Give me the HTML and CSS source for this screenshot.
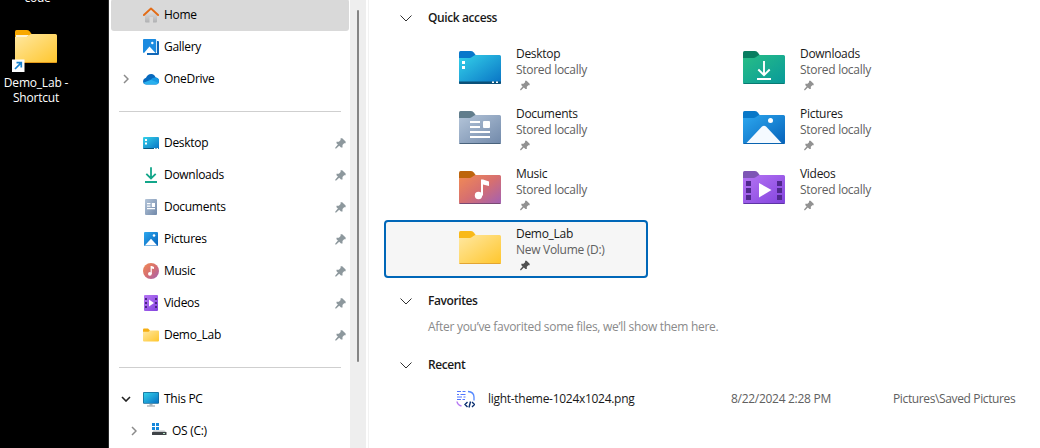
FILE: index.html
```
<!DOCTYPE html>
<html lang="en">
<head>
<meta charset="utf-8">
<title>Home - File Explorer</title>
<link rel="stylesheet" href="styles.css">
</head>
<body>
<svg class="defs" aria-hidden="true">
  <defs>
    <linearGradient id="g-yellow" x1="0" y1="0" x2="1" y2="1"><stop offset="0" stop-color="#ffe8a2"/><stop offset="1" stop-color="#ffc62c"/></linearGradient>
    <linearGradient id="g-desk" x1="0" y1="0" x2="1" y2="1"><stop offset="0" stop-color="#35d2ea"/><stop offset="1" stop-color="#0872c4"/></linearGradient>
    <linearGradient id="g-doc" x1="0" y1="0" x2="1" y2="1"><stop offset="0" stop-color="#b4c5d9"/><stop offset="1" stop-color="#7189aa"/></linearGradient>
    <linearGradient id="g-music" x1="0" y1="0" x2="1" y2="1"><stop offset="0" stop-color="#f28b54"/><stop offset=".5" stop-color="#d66f70"/><stop offset="1" stop-color="#a260b4"/></linearGradient>
    <linearGradient id="g-down" x1="0" y1="0" x2="1" y2="1"><stop offset="0" stop-color="#28be86"/><stop offset="1" stop-color="#08999a"/></linearGradient>
    <linearGradient id="g-pic" x1="0" y1="0" x2="1" y2="1"><stop offset="0" stop-color="#2da8ef"/><stop offset="1" stop-color="#0562ba"/></linearGradient>
    <linearGradient id="g-video" x1="0" y1="0" x2="1" y2="1"><stop offset="0" stop-color="#b675f4"/><stop offset="1" stop-color="#8243dd"/></linearGradient>
    <linearGradient id="g-house" x1="0" y1="0" x2="0" y2="1"><stop offset="0" stop-color="#e6e6e6"/><stop offset="1" stop-color="#b0b1b3"/></linearGradient>
    <symbol id="tab" viewBox="0 0 42 33"><path d="M0 1.500Q0 0 1.500 0H11.500Q13.500 0 14.800 1.400L17 4.500V9H0Z"/></symbol>
    <symbol id="front" viewBox="0 0 42 33"><path d="M0 7H10.500Q12 7 13 6L14.500 4.900Q15.500 4 17 4H40.500Q42 4 42 5.500V31.500Q42 33 40.500 33H1.500Q0 33 0 31.500Z"/></symbol>
    <symbol id="pin" viewBox="0 0 11 11"><path d="M5.600 0.300H7.200L10.600 3.500V5.200H9.100L7.500 7V9.400H6L4.200 7.800L1.200 10.600H0.200V9.700L2.900 6.500L1.500 5.200V3.700H3.900L5.600 2Z"/></symbol>
    <symbol id="chev-down" viewBox="0 0 12 7"><path d="M.5.500L6 6L11.500.500" fill="none" stroke="#303030"/></symbol>
  </defs>
</svg>
<div class="screen">
  <aside class="desktop">
    <div class="desk-label cut">code</div>
    <div class="shortcut">
      <svg class="shortcut-icon" viewBox="0 0 46 43">
        <g transform="translate(3 0)"><use href="#tab" width="42" height="33" fill="#f8a800"/><path d="M1 5H14L11 8H1Z" fill="#fff4d6"/><use href="#front" width="42" height="33" fill="url(#g-yellow)"/><path d="M.5 32.500H41.500" stroke="#e59b1b"/></g>
        <rect x="0" y="29.500" width="12.500" height="12.500" fill="#fff"/>
        <path d="M3 39L8.800 33.200M4.500 32.700H9.300V37.500" fill="none" stroke="#1782d0" stroke-width="1.700"/>
      </svg>
      <div class="desk-label">Demo_Lab -<br>Shortcut</div>
    </div>
  </aside>

  <nav class="sidebar">
    <div class="nav-row active"><span class="tw"></span>
      <svg class="ico" viewBox="0 0 16 16"><path d="M2 7.500L8 2.500L14 7.500V14.500Q14 15.500 13 15.500H10V10H6.500V15.500H3Q2 15.500 2 14.500Z" fill="url(#g-house)"/><path d="M.9 8L8 1.500L15.100 8" fill="none" stroke="#e36c16" stroke-width="1.900" stroke-linecap="round" stroke-linejoin="round"/></svg><span>Home</span></div>
    <div class="nav-row"><span class="tw"></span>
      <svg class="ico" viewBox="0 0 16 16"><path d="M14 2H15Q16 2 16 3V15Q16 16 15 16H4V14H14Z" fill="#1167b7"/><rect width="13.200" height="14" rx="1" fill="#1c8be0"/><path d="M1 14L6.500 7.500L12.500 14Z" fill="#fff"/><circle cx="9.300" cy="4" r="1.200" fill="#fff"/></svg><span>Gallery</span></div>
    <div class="nav-row"><span class="tw"><svg class="chev-r" viewBox="0 0 6 10"><path d="M1 1L5 5L1 9"/></svg></span>
      <svg class="ico" viewBox="0 0 16 16"><path d="M3.500 13.500Q0 13.500 0 10Q.2 7.500 3 6.800Q4.500 3 8.200 3Q11.600 3 12.600 6.500Q16 7 16 10.200Q15.800 13.500 12.500 13.500Z" fill="#0869bd"/><path d="M3 6.800L13.500 12.800Q16 12.400 16 10Q16 6.800 12.600 6.500Q9 6 7.500 9Z" fill="#1698e3"/><path d="M.4 11.800L8 8.700L15.500 12Q14.500 13.500 12.500 13.500H3.500Q1.200 13.500.4 11.800Z" fill="#29b0ee"/></svg><span>OneDrive</span></div>
    <div class="nav-row"><i class="rule"></i></div>
    <div class="nav-row"><span class="tw"></span>
      <svg class="ico" viewBox="0 0 16 16"><rect y="2" width="16" height="12" rx="1" fill="url(#g-desk)"/><path d="M2 4H4V6H2ZM2 7.500H4V9.500H2Z" fill="#fff"/><path d="M.5 13.500H15.500" stroke="#07577f"/><path d="M11 13.500H12.500M13.500 13.500H15" stroke="#fff"/></svg><span>Desktop</span><svg class="pin"><use href="#pin"/></svg></div>
    <div class="nav-row"><span class="tw"></span>
      <svg class="ico" viewBox="0 0 16 16"><path d="M8 .3V11M3.300 6.800L8 11.500L12.700 6.800M2 15H14" fill="none" stroke="#13a68a" stroke-width="1.800"/></svg><span>Downloads</span><svg class="pin"><use href="#pin"/></svg></div>
    <div class="nav-row"><span class="tw"></span>
      <svg class="ico" viewBox="0 0 16 16"><rect x="2" width="12" height="16" rx="1" fill="url(#g-doc)"/><path d="M4 4.700H7.500M4 7.200H7.500M4 9.700H12" stroke="#fff" stroke-width="1.200"/><path d="M8.800 4H12V8H8.800Z" fill="#fff"/></svg><span>Documents</span><svg class="pin"><use href="#pin"/></svg></div>
    <div class="nav-row"><span class="tw"></span>
      <svg class="ico" viewBox="0 0 16 16"><rect x="1" y="1" width="14" height="14" rx="1" fill="url(#g-pic)"/><path d="M1.800 14.500L8 7.700L14.200 14.500Z" fill="#fff"/><circle cx="11" cy="4.500" r="1.300" fill="#fff"/></svg><span>Pictures</span><svg class="pin"><use href="#pin"/></svg></div>
    <div class="nav-row"><span class="tw"></span>
      <svg class="ico" viewBox="0 0 16 16"><circle cx="8" cy="8" r="8" fill="url(#g-music)"/><circle cx="6.900" cy="10.800" r="1.900" fill="#fff"/><path d="M7.600 3H8.800L11 4V6L8.800 5.400V11H7.600Z" fill="#fff"/></svg><span>Music</span><svg class="pin"><use href="#pin"/></svg></div>
    <div class="nav-row"><span class="tw"></span>
      <svg class="ico" viewBox="0 0 16 16"><rect x="1" width="14" height="16" rx="1" fill="url(#g-video)"/><path d="M2 3H4V5H2ZM2 7H4V9H2ZM2 11H4V13H2ZM12 3H14V5H12ZM12 7H14V9H12ZM12 11H14V13H12Z" fill="#4b2685"/><path d="M6 4.500L11 8L6 11.500Z" fill="#fff"/></svg><span>Videos</span><svg class="pin"><use href="#pin"/></svg></div>
    <div class="nav-row"><span class="tw"></span>
      <svg class="ico" viewBox="0 0 16 16"><path d="M0 2.500Q0 1.500 1 1.500H5L7 3.500V6H0Z" fill="#f5ae13"/><path d="M0 4.800H5.500L7 3.500H15Q16 3.500 16 4.500V13.500Q16 14.500 15 14.500H1Q0 14.500 0 13.500Z" fill="url(#g-yellow)"/></svg><span>Demo_Lab</span><svg class="pin"><use href="#pin"/></svg></div>
    <div class="nav-row"><i class="rule"></i></div>
    <div class="nav-row"><span class="tw"><svg class="chev-d" viewBox="0 0 10 6"><path d="M1 1L5 5L9 1"/></svg></span>
      <svg class="ico" viewBox="0 0 16 16"><rect y="1" width="16" height="11.800" rx="1" fill="#146b99"/><rect x=".8" y="1.800" width="14.400" height="10.200" fill="url(#g-desk)"/><path d="M6.500 13H9.500V14.500H6.500Z" fill="#a9b3ba"/><path d="M4 15H12" stroke="#8d999f"/></svg><span>This PC</span></div>
    <div class="nav-row child"><span class="tw"><svg class="chev-r" viewBox="0 0 6 10"><path d="M1 1L5 5L1 9"/></svg></span>
      <svg class="ico" viewBox="0 0 16 16"><path d="M1 0H4V3H1ZM5 0H8V3H5ZM1 4H4V7H1ZM5 4H8V7H5Z" fill="#1487db"/><path d="M2.500 7.500H13.500L15.500 9.500H1Z" fill="#c4c6c9"/><rect x="1" y="9" width="14.500" height="3" rx=".5" fill="#3f4347"/><path d="M12 10.500H14" stroke="#b7e7c7"/></svg><span>OS (C:)</span></div>
  </nav>
  <div class="scroll"><i></i></div>

  <main class="content">
    <h2 class="head"><svg><use href="#chev-down"/></svg>Quick access</h2>
    <section class="grid">
      <article class="card"><svg class="folder" viewBox="0 0 42 33"><use href="#tab" width="42" height="33" fill="#0877cb"/><use href="#front" width="42" height="33" fill="url(#g-desk)"/><path d="M0 30.500H42V32Q42 33 41 33H1Q0 33 0 32Z" fill="#0b5078"/><path d="M3 10H6V13H3ZM3 15H6V18H3ZM33 30.500H35V32H33ZM37 30.500H39V32H37Z" fill="#fff"/></svg><div class="info"><b>Desktop</b><span>Stored locally</span><svg class="pin"><use href="#pin"/></svg></div></article>
      <article class="card"><svg class="folder" viewBox="0 0 42 33"><use href="#tab" width="42" height="33" fill="#087d60"/><use href="#front" width="42" height="33" fill="url(#g-down)"/><path d="M.5 32.500H41.500" stroke="#087a72"/><path d="M21 10V23.500M15.300 18.500L21 24.200L26.700 18.500M14 28H28" fill="none" stroke="#fff" stroke-width="1.900"/></svg><div class="info"><b>Downloads</b><span>Stored locally</span><svg class="pin"><use href="#pin"/></svg></div></article>
      <article class="card"><svg class="folder" viewBox="0 0 42 33"><use href="#tab" width="42" height="33" fill="#617d8c"/><use href="#front" width="42" height="33" fill="url(#g-doc)"/><path d="M.5 32.500H41.500" stroke="#49637c"/><path d="M11 11H21M11 16H21M11 21H31M11 26H31" stroke="#fff" stroke-width="2"/><rect x="24" y="10" width="7" height="7" rx="1" fill="#fff"/></svg><div class="info"><b>Documents</b><span>Stored locally</span><svg class="pin"><use href="#pin"/></svg></div></article>
      <article class="card"><svg class="folder" viewBox="0 0 42 33"><use href="#tab" width="42" height="33" fill="#0878c8"/><use href="#front" width="42" height="33" fill="url(#g-pic)"/><path d="M3.500 32L19 15.500Q21 14 23 15.500L38.500 32Z" fill="#f5faff"/><circle cx="27.500" cy="9.500" r="2.500" fill="#fff"/><path d="M.5 32.500H41.500" stroke="#0863b0"/></svg><div class="info"><b>Pictures</b><span>Stored locally</span><svg class="pin"><use href="#pin"/></svg></div></article>
      <article class="card"><svg class="folder" viewBox="0 0 42 33"><use href="#tab" width="42" height="33" fill="#bd650c"/><use href="#front" width="42" height="33" fill="url(#g-music)"/><path d="M.5 32.500H41.500" stroke="#7a4973"/><circle cx="19.500" cy="24.500" r="3.700" fill="#fff"/><path d="M22 8.500H24L30 10.500V15L24 13.500V24.500H22Z" fill="#fff"/></svg><div class="info"><b>Music</b><span>Stored locally</span><svg class="pin"><use href="#pin"/></svg></div></article>
      <article class="card"><svg class="folder" viewBox="0 0 42 33"><use href="#tab" width="42" height="33" fill="#7d55b5"/><use href="#front" width="42" height="33" fill="url(#g-video)"/><path d="M.5 32.500H41.500" stroke="#5d35a5"/><path d="M3 10H8V15H3ZM3 17H8V22H3ZM3 24H8V29H3ZM34 10H39V15H34ZM34 17H39V22H34ZM34 24H39V29H34Z" fill="#50288e"/><path d="M16 12L28.500 19L16 26.500Z" fill="#fff"/></svg><div class="info"><b>Videos</b><span>Stored locally</span><svg class="pin"><use href="#pin"/></svg></div></article>
      <article class="card selected"><svg class="folder" viewBox="0 0 42 33"><use href="#tab" width="42" height="33" fill="#f9b919"/><use href="#front" width="42" height="33" fill="url(#g-yellow)"/><path d="M.5 32.500H41.500" stroke="#e3a532"/></svg><div class="info"><b>Demo_Lab</b><span>New Volume (D:)</span><svg class="pin"><use href="#pin"/></svg></div></article>
    </section>
    <h2 class="head"><svg><use href="#chev-down"/></svg>Favorites</h2>
    <p class="empty">After you’ve favorited some files, we’ll show them here.</p>
    <h2 class="head recent"><svg><use href="#chev-down"/></svg>Recent</h2>
    <div class="file">
      <svg class="file-ico" viewBox="0 0 19 19"><path d="M1 1.500H5M6.500 1.500H9.500M1 4.500H3M4.500 4.500H9.500M1 7H6M7.500 7H9.500M1 9.500H5M6.500 9.500H9" stroke="#5276ff"/><path d="M12 1.500Q18 2 18 7V10.500" fill="none" stroke="#5488ff" stroke-width="1.300"/><path d="M1 11.500Q1.500 15 5.500 16" fill="none" stroke="#b77af3" stroke-width="1.500"/><path d="M11.500 12L9 14.500L11.500 17M16 12L18.500 14.500L16 17M14.500 11.500L13 17.500" fill="none" stroke="#092e70" stroke-width="1.400"/></svg>
      <span class="name">light-theme-1024x1024.png</span><span class="date">8/22/2024 2:28 PM</span><span class="path">Pictures\Saved Pictures</span>
    </div>
  </main>
</div>
</body>
</html>
```

FILE: styles.css
```
* { box-sizing: border-box; }
body { margin: 0; font: 12px/16px "Open Sans", "Noto Sans", sans-serif; letter-spacing: -0.29px; color: #191919; background: #fff; }
svg { display: block; flex: none; }
.defs { position: absolute; width: 0; height: 0; }
.screen { display: flex; width: 1040px; height: 448px; overflow: hidden; }

.desktop { width: 109px; background: #000; border-right: 1px solid #292929; color: #fff; flex: none; }
.desk-label { width: 72px; text-align: center; line-height: 15px; letter-spacing: -0.2px; white-space: nowrap; }
.desk-label.cut { margin-top: -10px; padding-left: 3px; }
.shortcut { margin-top: 25px; }
.shortcut-icon { width: 46px; height: 43px; margin-left: 12px; }
.shortcut .desk-label { margin-top: 2px; }

.sidebar { width: 241px; flex: none; margin-top: -1px; color: #000; }
.nav-row { display: flex; align-items: center; height: 32px; padding: 0 4px 0 10px; margin: 0 1px 0 2px; white-space: nowrap; }
.nav-row.active { background: #d9d9d9; border-radius: 3px; }
.nav-row.child { padding-left: 18px; }
.tw { width: 22px; flex: none; }
.ico { width: 16px; height: 16px; margin-right: 5px; }
.pin { width: 11px; height: 11px; fill: #8d989d; }
.nav-row .pin { margin-left: auto; margin-right: -1px; }
.chev-r { width: 6px; height: 10px; margin-left: 2px; fill: none; stroke: #8b8b8b; stroke-width: 1.5; }
.chev-d { width: 10px; height: 6px; fill: none; stroke: #222; stroke-width: 1.6; }
.rule { width: 222px; height: 1px; background: #cfcfcf; margin-left: -2px; }

.scroll { width: 16px; flex: none; background: #eee; padding: 10px 0 0 7px; }
.scroll i { display: block; width: 2px; height: 352px; background: #858585; border-radius: 1px; }

.content { flex: 1; min-width: 0; margin-left: 2px; border-left: 1px solid #f2f2f2; padding-left: 15px; }
.head { display: flex; align-items: center; height: 20px; margin: 8px 0 0 16px; font-size: 12px; font-weight: 600; letter-spacing: -0.4px; }
.head svg { width: 12px; height: 7px; margin-right: 16px; }
.grid { display: grid; grid-template-columns: 264px 264px; column-gap: 20px; row-gap: 2px; margin-top: 12px; }
.card { display: flex; height: 58px; padding: 4px 0 0 73px; border: 2px solid transparent; border-radius: 4px; }
.card.selected { background: #f6f6f6; border-color: #0067b8; }
.folder { width: 42px; height: 33px; margin: 5px 15px 0 0; }
.info { display: flex; flex-direction: column; white-space: nowrap; }
.info b { font-weight: 400; }
.info span { color: #606060; }
.info .pin { fill: #929292; margin: 2px 0 0 4px; }
.info .pin { width: 10px; }
.selected .info .pin { fill: #505050; }
.grid + .head { margin-top: 13px; }
.empty { margin: 8px 0 0 44px; color: #8a8a8a; }
.head.recent { margin-top: 20px; }
.file { display: flex; align-items: center; height: 32px; margin-top: 8px; padding-left: 72px; white-space: nowrap; }
.file-ico { width: 19px; height: 19px; margin-right: 13px; }
.name { width: 243px; }
.date { width: 162px; color: #606060; }
.path { color: #606060; letter-spacing: -0.37px; }
```
